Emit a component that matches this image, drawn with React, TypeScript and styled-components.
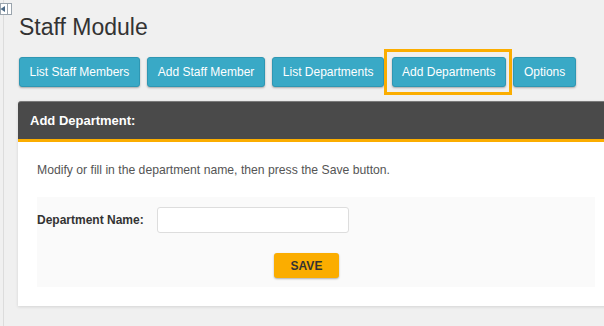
import React from 'react';
import styled, { createGlobalStyle } from 'styled-components';

const GlobalStyle = createGlobalStyle`
  html, body {
    margin: 0;
    padding: 0;
    background: #f0f0f0;
    font-family: 'Liberation Sans', Arial, Helvetica, sans-serif;
    overflow: hidden;
  }
`;

const tabs = ['List Staff Members', 'Add Staff Member', 'List Departments', 'Add Departments', 'Options'];

const App: React.FunctionComponent = () => {
  return (
    <Page>
      <GlobalStyle />
      <SideEdge>
        <Toggle>
          <svg width="12" height="13" viewBox="0 0 12 13">
            <rect x="0.5" y="0.5" width="11" height="11" fill="#fff" stroke="#9aa4ad" />
            <line x1="7.5" y1="1" x2="7.5" y2="11" stroke="#9aa4ad" />
            <path d="M0.5 6 L5 3 L5 9 Z" fill="#4d6a86" />
          </svg>
        </Toggle>
      </SideEdge>
      <Main>
        <Title>Staff Module</Title>
        <TabBar>
          {tabs.map((t) => (
            <TabButton key={t} active={t === 'Add Departments'}>
              {t}
            </TabButton>
          ))}
        </TabBar>
        <Panel>
          <PanelHeader>Add Department:</PanelHeader>
          <PanelBody>
            <Intro>Modify or fill in the department name, then press the Save button.</Intro>
            <FormArea>
              <FieldRow>
                <Label>Department Name:</Label>
                <Input type="text" />
              </FieldRow>
              <ActionRow>
                <SaveButton>SAVE</SaveButton>
              </ActionRow>
            </FormArea>
          </PanelBody>
        </Panel>
      </Main>
    </Page>
  );
};

const Page = styled.div`
  display: flex;
  width: 604px;
  height: 326px;
  overflow: hidden;
  background: #f0f0f0;
`;

const SideEdge = styled.div`
  position: relative;
  flex: 0 0 3px;
  border-right: 1px solid #dcdcdc;
`;

const Toggle = styled.div`
  position: absolute;
  top: 3px;
  left: 0;
  width: 12px;
  height: 13px;
  line-height: 0;
`;

const Main = styled.div`
  flex: 1;
  padding: 13px 0 0 14px;
  min-width: 0;
`;

const Title = styled.h1`
  margin: 0 0 0 1px;
  font-size: 23px;
  line-height: 28px;
  font-weight: 400;
  color: #333333;
`;

const TabBar = styled.div`
  display: flex;
  gap: 7.5px;
  margin: 16px 0 0 1px;
`;

const TabButton = styled.button<{ active?: boolean }>`
  position: relative;
  height: 30px;
  padding: 0 9.5px;
  border: 1px solid #2f97b3;
  border-radius: 3px;
  background: #39a9c6;
  color: #ffffff;
  font-family: inherit;
  font-size: 12px;
  box-shadow: 0 1px 2px rgba(0, 0, 0, 0.3);
  white-space: nowrap;

  &::after {
    content: '';
    display: ${(p) => (p.active ? 'block' : 'none')};
    position: absolute;
    top: -9px;
    left: -9px;
    right: -7px;
    bottom: -9px;
    border: 3px solid #fbad00;
  }
`;

const Panel = styled.div`
  width: 600px;
  margin-top: 14px;
  box-shadow: 0 1px 3px rgba(0, 0, 0, 0.12);
`;

const PanelHeader = styled.div`
  display: flex;
  align-items: center;
  box-sizing: border-box;
  height: 41px;
  padding-left: 12px;
  background: #4a4a4a;
  border-top: 1px solid #7a7a7a;
  border-bottom: 3px solid #fbad00;
  border-radius: 3px 0 0 0;
  color: #ffffff;
  font-size: 13px;
  font-weight: 700;
`;

const PanelBody = styled.div`
  background: #ffffff;
  padding: 19px 24px 19px 19px;
`;

const Intro = styled.p`
  margin: 0;
  font-size: 12.2px;
  line-height: 18px;
  color: #555555;
`;

const FormArea = styled.div`
  margin-top: 18px;
  width: 558px;
  background: #fafafa;
  padding: 10px 0 9px 0;
`;

const FieldRow = styled.div`
  display: flex;
  align-items: center;
`;

const Label = styled.label`
  width: 120px;
  font-size: 12px;
  font-weight: 700;
  color: #333333;
`;

const Input = styled.input`
  width: 192px;
  height: 26px;
  box-sizing: border-box;
  border: 1px solid #dddddd;
  border-radius: 3px;
  background: #ffffff;
`;

const ActionRow = styled.div`
  display: flex;
  margin-top: 20px;
  padding-left: 237px;
`;

const SaveButton = styled.button`
  width: 65px;
  height: 25px;
  border: none;
  border-radius: 3px;
  background: #fbad00;
  color: #333333;
  font-family: inherit;
  font-size: 12px;
  font-weight: 700;
  box-shadow: 0 1px 2px rgba(0, 0, 0, 0.3);
`;

export default App;
